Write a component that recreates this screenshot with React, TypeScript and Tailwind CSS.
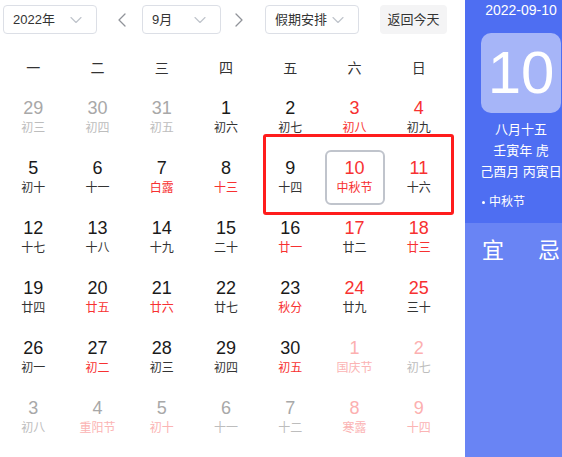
import { ChevronDown, ChevronLeft, ChevronRight } from "lucide-react";

type Tone = "n" | "r" | "g" | "p";

interface Day {
  d: number;
  l: string;
  dc: Tone;
  lc: Tone;
  sel?: boolean;
}

const numColor: Record<Tone, string> = {
  n: "text-[#1a1a1a]",
  r: "text-[#f73131]",
  g: "text-[#a8a8a8]",
  p: "text-[#fcb0b0]",
};

const lunarColor: Record<Tone, string> = {
  n: "text-[#333333]",
  r: "text-[#f73131]",
  g: "text-[#bdbdbd]",
  p: "text-[#fbb4b4]",
};

const weekdays = ["一", "二", "三", "四", "五", "六", "日"];

// 2022年9月, 周一开头
const rows: Day[][] = [
  [
    { d: 29, l: "初三", dc: "g", lc: "g" },
    { d: 30, l: "初四", dc: "g", lc: "g" },
    { d: 31, l: "初五", dc: "g", lc: "g" },
    { d: 1, l: "初六", dc: "n", lc: "n" },
    { d: 2, l: "初七", dc: "n", lc: "n" },
    { d: 3, l: "初八", dc: "r", lc: "r" },
    { d: 4, l: "初九", dc: "r", lc: "n" },
  ],
  [
    { d: 5, l: "初十", dc: "n", lc: "n" },
    { d: 6, l: "十一", dc: "n", lc: "n" },
    { d: 7, l: "白露", dc: "n", lc: "r" },
    { d: 8, l: "十三", dc: "n", lc: "r" },
    { d: 9, l: "十四", dc: "n", lc: "n" },
    { d: 10, l: "中秋节", dc: "r", lc: "r", sel: true },
    { d: 11, l: "十六", dc: "r", lc: "n" },
  ],
  [
    { d: 12, l: "十七", dc: "n", lc: "n" },
    { d: 13, l: "十八", dc: "n", lc: "n" },
    { d: 14, l: "十九", dc: "n", lc: "n" },
    { d: 15, l: "二十", dc: "n", lc: "n" },
    { d: 16, l: "廿一", dc: "n", lc: "r" },
    { d: 17, l: "廿二", dc: "r", lc: "n" },
    { d: 18, l: "廿三", dc: "r", lc: "r" },
  ],
  [
    { d: 19, l: "廿四", dc: "n", lc: "n" },
    { d: 20, l: "廿五", dc: "n", lc: "r" },
    { d: 21, l: "廿六", dc: "n", lc: "r" },
    { d: 22, l: "廿七", dc: "n", lc: "n" },
    { d: 23, l: "秋分", dc: "n", lc: "r" },
    { d: 24, l: "廿九", dc: "r", lc: "n" },
    { d: 25, l: "三十", dc: "r", lc: "n" },
  ],
  [
    { d: 26, l: "初一", dc: "n", lc: "n" },
    { d: 27, l: "初二", dc: "n", lc: "r" },
    { d: 28, l: "初三", dc: "n", lc: "n" },
    { d: 29, l: "初四", dc: "n", lc: "n" },
    { d: 30, l: "初五", dc: "n", lc: "r" },
    { d: 1, l: "国庆节", dc: "p", lc: "p" },
    { d: 2, l: "初七", dc: "p", lc: "g" },
  ],
  [
    { d: 3, l: "初八", dc: "g", lc: "g" },
    { d: 4, l: "重阳节", dc: "g", lc: "p" },
    { d: 5, l: "初十", dc: "g", lc: "p" },
    { d: 6, l: "十一", dc: "g", lc: "g" },
    { d: 7, l: "十二", dc: "g", lc: "g" },
    { d: 8, l: "寒露", dc: "p", lc: "p" },
    { d: 9, l: "十四", dc: "p", lc: "p" },
  ],
];

function Select({ label, width }: { label: string; width: string }) {
  return (
    <div
      className={`flex h-[29px] items-center justify-between rounded border border-[#dcdfe6] bg-white pl-[9px] pr-[10px] text-[13px] text-[#333] ${width}`}
    >
      <span>{label}</span>
      <ChevronDown size={20} strokeWidth={1.4} className="text-[#c0c4cc]" />
    </div>
  );
}

export default function App() {
  return (
    <div
      className="relative flex h-[457px] w-[562px] overflow-hidden bg-white"
      style={{ fontFamily: '"Liberation Sans", "Noto Sans CJK SC", sans-serif' }}
    >
      {/* Left: calendar */}
      <div className="w-[465px] shrink-0">
        {/* Toolbar */}
        <div className="flex h-[49px] items-start pl-[3px] pt-[5px]">
          <Select label="2022年" width="w-[94px]" />
          <div className="ml-[13px] flex h-[29px] w-[24px] items-center justify-center text-[#909399]">
            <ChevronLeft size={26} strokeWidth={1.3} />
          </div>
          <div className="ml-[8px]">
            <Select label="9月" width="w-[79px]" />
          </div>
          <div className="ml-[6px] flex h-[29px] w-[24px] items-center justify-center text-[#909399]">
            <ChevronRight size={26} strokeWidth={1.3} />
          </div>
          <div className="ml-[14px]">
            <Select label="假期安排" width="w-[94px]" />
          </div>
          <button className="ml-[21px] flex h-[29px] w-[67px] items-center justify-center rounded bg-[#f4f4f5] text-[13px] text-[#333]">
            返回今天
          </button>
        </div>

        {/* Weekday header */}
        <div className="ml-[1px] grid h-[38px] w-[450px] grid-cols-7 items-center">
          {weekdays.map((w) => (
            <div key={w} className="text-center text-[14px] text-[#333]">
              {w}
            </div>
          ))}
        </div>

        {/* Days */}
        <div className="ml-[1px] w-[450px]">
          {rows.map((row, i) => (
            <div key={i} className="grid h-[60px] grid-cols-7">
              {row.map((c, j) => (
                <div key={j} className="flex items-center justify-center">
                  <div
                    className={`flex h-[55px] w-[60px] flex-col items-center justify-center rounded-md border-2 ${
                      c.sel ? "border-[#c0c4cc]" : "border-transparent"
                    }`}
                  >
                    <span className={`text-[18px] leading-[22px] ${numColor[c.dc]}`}>
                      {c.d}
                    </span>
                    <span className={`text-[12px] leading-[18px] ${lunarColor[c.lc]}`}>
                      {c.l}
                    </span>
                  </div>
                </div>
              ))}
            </div>
          ))}
        </div>
      </div>

      {/* Right: day detail */}
      <div className="flex w-[112px] shrink-0 flex-col bg-[#4e6ef2] text-white">
        <div className="text-center text-[14px] leading-[20px]">2022-09-10</div>
        <div className="mx-auto mt-[13px] flex h-[80px] w-[80px] items-center justify-center rounded-[10px] bg-[#a6b5f8] text-[60px] leading-none">
          10
        </div>
        <div className="mt-[6px] flex flex-col items-center text-[13px] leading-[21px]">
          <span>八月十五</span>
          <span>壬寅年 虎</span>
          <span>己酉月 丙寅日</span>
        </div>
        <div className="mt-[11px] flex items-center gap-[4px] pl-[17px] text-[12px] leading-[18px]">
          <span className="h-[3px] w-[3px] rounded-full bg-white" />
          <span>中秋节</span>
        </div>
        <div className="mt-[12px] flex flex-1 bg-[#6984f4] pt-[14px]">
          <div className="flex-1 text-center text-[22px] leading-[28px]">宜</div>
          <div className="flex-1 text-center text-[22px] leading-[28px]">忌</div>
        </div>
      </div>

      {/* Annotation box */}
      <div className="pointer-events-none absolute left-[263px] top-[134px] h-[81px] w-[191px] rounded-[3px] border-[3px] border-[#ff1c1c]" />
    </div>
  );
}
